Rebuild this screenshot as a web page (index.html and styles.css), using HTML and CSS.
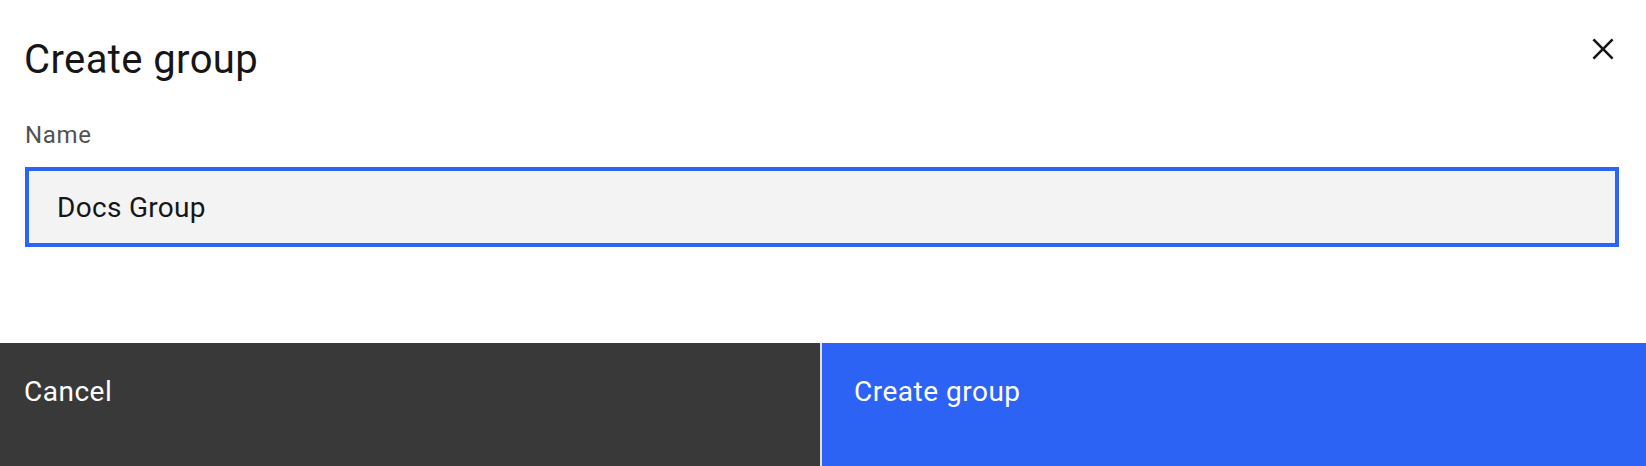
FILE: index.html
```html
<!DOCTYPE html>
<html lang="en">
<head>
<meta charset="utf-8">
<title>Create group</title>
<link rel="stylesheet" href="styles.css">
</head>
<body>
<div class="modal">
  <div class="modal-header">
    <h2 class="modal-title">Create group</h2>
    <button class="modal-close" aria-label="Close">
      <svg width="42" height="42" viewBox="0 0 32 32" aria-hidden="true">
        <path d="M24 9.4L22.6 8 16 14.6 9.4 8 8 9.4 14.6 16 8 22.6 9.4 24 16 17.4 22.6 24 24 22.6 17.4 16 24 9.4z" fill="#161616"/>
      </svg>
    </button>
  </div>
  <div class="modal-body">
    <label class="field-label" for="name">Name</label>
    <div class="text-input">Docs Group</div>
  </div>
  <div class="modal-footer">
    <button class="btn btn-secondary">Cancel</button>
    <button class="btn btn-primary">Create group</button>
  </div>
</div>
</body>
</html>
```
FILE: styles.css
```css
* { box-sizing: border-box; }
html, body {
  margin: 0;
  padding: 0;
  background: #ffffff;
}
body {
  font-family: Roboto, "Liberation Sans", sans-serif;
  color: #161616;
  width: 1646px;
  height: 466px;
  overflow: hidden;
}
.modal {
  display: flex;
  flex-direction: column;
  height: 466px;
}
.modal-header {
  display: flex;
  justify-content: space-between;
  align-items: flex-start;
  padding: 32px 22px 0 24px;
}
.modal-title {
  margin: 0;
  font-size: 40px;
  font-weight: 400;
  line-height: 56px;
  letter-spacing: 0.4px;
  color: #161616;
}
.modal-close {
  margin-top: -4px;
  padding: 0;
  border: 0;
  background: transparent;
  display: block;
  line-height: 0;
}
.modal-body {
  padding: 31px 27px 0 25px;
  display: flex;
  flex-direction: column;
}
.field-label {
  font-size: 24px;
  line-height: 32px;
  letter-spacing: 0.64px;
  color: #525252;
  margin-bottom: 16px;
}
.text-input {
  height: 80px;
  border: 4px solid #2d63f5;
  background: #f3f3f3;
  padding: 0 28px;
  display: flex;
  align-items: center;
  font-size: 28px;
  letter-spacing: 0.3px;
  color: #161616;
}
.modal-footer {
  margin-top: auto;
  height: 123px;
  display: grid;
  grid-template-columns: 820px 1fr;
  column-gap: 2px;
  background: #e0e0e0;
}
.btn {
  border: 0;
  margin: 0;
  font-family: inherit;
  font-size: 28px;
  line-height: 36px;
  letter-spacing: 0.5px;
  text-align: left;
  display: flex;
  align-items: flex-start;
  padding-top: 31px;
  color: #ffffff;
}
.btn-secondary {
  background: #393939;
  padding-left: 24px;
}
.btn-primary {
  background: #2d63f5;
  padding-left: 32px;
}
```
